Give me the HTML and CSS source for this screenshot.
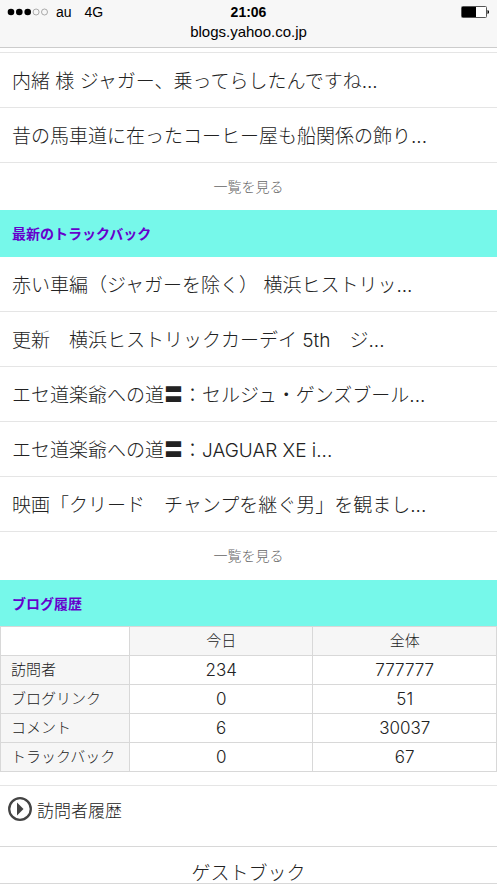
FILE: index.html
```
<!DOCTYPE html>
<html lang="ja">
<head>
  <meta charset="UTF-8" />
  <meta name="viewport" content="width=device-width, initial-scale=1" />
  <title>blogs.yahoo.co.jp</title>
  <link rel="stylesheet" href="styles.css">
</head>
<body>

  <header class="bar">
    <div class="status">
      <div class="carrier">
        <svg class="signal" width="42" height="8" viewBox="0 0 42 8">
          <circle cx="4" cy="4" r="3.3" />
          <circle cx="12.3" cy="4" r="3.3" />
          <circle cx="20.7" cy="4" r="3.3" />
          <circle class="off" cx="29.1" cy="4" r="3" />
          <circle class="off" cx="37.5" cy="4" r="3" />
        </svg>
        <span>au</span>
        <span class="network">4G</span>
      </div>
      <time class="clock">21:06</time>
      <svg class="battery" width="30" height="12" viewBox="0 0 30 12">
        <rect x="1.500" y="0.5" width="25" height="11" rx="1" fill="#fff" stroke="#555" />
        <rect x="2" y="1" width="14" height="10" />
        <path d="M27.500 4c2 .5 2 3.500 0 4z" />
      </svg>
    </div>
    <div class="address">blogs.yahoo.co.jp</div>
  </header>

  <main>
    <!-- 最新のコメント -->
    <section class="comments">
      <ul class="list">
        <li><a href="#">内緒 様 ジャガー、乗ってらしたんですね...</a></li>
        <li><a href="#">昔の馬車道に在ったコーヒー屋も船関係の飾り...</a></li>
      </ul>
      <a class="more" href="#">一覧を見る</a>
    </section>

    <section>
      <h2>最新のトラックバック</h2>
      <ul class="list">
        <li><a href="#">赤い車編（ジャガーを除く） 横浜ヒストリッ...</a></li>
        <li><a href="#">更新　横浜ヒストリックカーデイ 5th　ジ...</a></li>
        <li><a href="#">エセ道楽爺への道〓：セルジュ・ゲンズブール...</a></li>
        <li><a href="#">エセ道楽爺への道〓：JAGUAR XE i...</a></li>
        <li><a href="#">映画「クリード　チャンプを継ぐ男」を観まし...</a></li>
      </ul>
      <a class="more" href="#">一覧を見る</a>
    </section>

    <section class="log">
      <h2>ブログ履歴</h2>
      <table class="history">
        <thead>
          <tr><td></td><th scope="col">今日</th><th scope="col">全体</th></tr>
        </thead>
        <tbody>
          <tr><th scope="row">訪問者</th><td>234</td><td>777777</td></tr>
          <tr><th scope="row">ブログリンク</th><td>0</td><td>51</td></tr>
          <tr><th scope="row">コメント</th><td>6</td><td>30037</td></tr>
          <tr><th scope="row">トラックバック</th><td>0</td><td>67</td></tr>
        </tbody>
      </table>
      <a class="visitors" href="#">
        <svg width="24" height="24" viewBox="0 0 24 24">
          <circle cx="12" cy="12" r="10.800" fill="none" stroke="#444" stroke-width="2.300" />
          <path d="M9 5.500L15.500 12L9 18.500z" fill="#444" />
        </svg>
        訪問者履歴
      </a>
    </section>

    <a class="guestbook" href="#">ゲストブック</a>
  </main>

</body>
</html>
```
FILE: styles.css
```
* {
  box-sizing: border-box;
}

body {
  margin: 0;
  background: #fff;
  color: #222;
  font-family: Inter, "Noto Sans CJK JP", sans-serif;
  font-weight: 300;
}

a {
  color: inherit;
  text-decoration: none;
}

/* ブラウザのバー */
.bar {
  height: 48px;
  padding: 2px 7px 0;
  background: #f7f7f7;
  border-bottom: 1px solid #ccc;
  color: #000;
  font-family: "Liberation Sans", Arial, sans-serif;
  font-weight: 400;
  font-size: 14px;
  line-height: 20px;
}

.status {
  display: grid;
  grid-template-columns: 1fr auto 1fr;
  align-items: center;
}

.carrier {
  display: flex;
  align-items: center;
  gap: 7px;
}

.network {
  margin-left: 6px;
}

.signal .off {
  fill: none;
  stroke: #777;
  stroke-width: 0.6;
}

.clock {
  font-weight: bold;
}

.battery {
  justify-self: end;
}

.address {
  font-size: 15px;
  text-align: center;
}

/* 記事リスト */
.comments {
  margin-top: 4px;
  border-top: 1px solid #e5e5e5;
}

.list {
  margin: 0;
  padding: 0;
  list-style: none;
}

.list a {
  display: block;
  padding: 4px 12px 0;
  border-bottom: 1px solid #e5e5e5;
  font-size: 19px;
  line-height: 50px;
  white-space: nowrap;
}

.more {
  display: block;
  color: #666;
  font-size: 14px;
  line-height: 47px;
  text-align: center;
}

h2 {
  margin: 0;
  padding: 0 12px;
  background: #76f8ea;
  color: #6600cc;
  font-size: 14px;
  font-weight: 700;
  line-height: 47px;
}

/* ブログ履歴 */
.log {
  margin-top: 1px;
}

.history {
  width: 100%;
  margin-top: -1px;
  table-layout: fixed;
  border-collapse: collapse;
  font-size: 17px;
  line-height: 28px;
}

.history th,
.history td {
  height: 29px;
  padding: 0;
  border: 1px solid #d8d8d8;
  font-weight: 300;
  text-align: center;
}

.history th {
  background: #f6f6f6;
  font-size: 15px;
}

.history tbody th {
  padding-left: 10px;
  text-align: left;
}

.history tr > :first-child {
  width: 26%;
}

.visitors {
  display: flex;
  align-items: center;
  gap: 5px;
  height: 62px;
  margin-top: 13px;
  padding: 0 8px 14px;
  border-top: 1px solid #e5e5e5;
  border-bottom: 1px solid #d8d8d8;
  font-size: 17px;
}

.guestbook {
  display: block;
  padding-top: 17px;
  border-bottom: 1px solid #d8d8d8;
  font-size: 19px;
  line-height: 19px;
  text-align: center;
}
```
